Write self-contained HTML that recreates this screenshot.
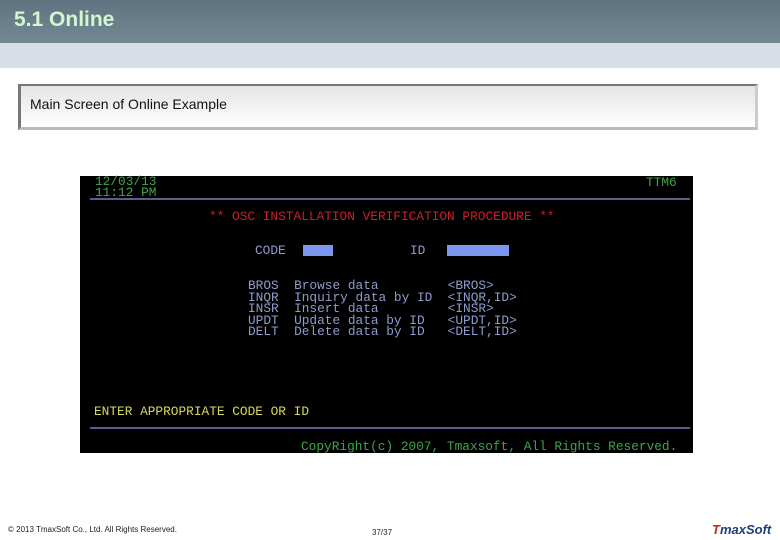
<!DOCTYPE html>
<html><head><meta charset="utf-8"><style>
body{margin:0;width:780px;height:540px;position:relative;background:#fff;overflow:hidden;font-family:"Liberation Sans",sans-serif}
.hdr{position:absolute;left:0;top:0;width:780px;height:43px;background:linear-gradient(#5f7480,#718892)}
.hdr span{position:absolute;left:14px;top:8px;font-size:21px;color:#d4f5d0;font-weight:bold}
.band{position:absolute;left:0;top:43px;width:780px;height:25px;background:#d8dee5}
.box{position:absolute;left:18px;top:84px;width:740px;height:46px;border:1px solid #888;border-left:3px solid #777;border-top:2px solid #777;border-bottom:3px solid #bbb;border-right:3px solid #ccc;background:linear-gradient(#e4e4e4,#fff);box-sizing:border-box}
.box span{position:absolute;left:9px;top:10px;font-size:14px;color:#111}
.term{position:absolute;left:80px;top:176px;width:613px;height:277px;background:#000}
.t{position:absolute;font-family:"Liberation Mono",monospace;font-size:12.8px;white-space:pre;line-height:11.5px}
.g{color:#3ca64a}.r{color:#c8202a}.b{color:#8d9ccc}.y{color:#d8d860}
.line{position:absolute;left:10px;width:600px;height:2px;background:#5a5e8a}
.fld{position:absolute;height:11px;background:#7d96ef}
.foot{position:absolute;font-size:8px;color:#222;top:525px}
</style></head><body>
<div class="hdr"><span>5.1 Online</span></div>
<div class="band"></div>
<div class="box"><span>Main Screen of Online Example</span></div>
<div class="term">
<div class="t g" style="left:15px;top:0px;line-height:11px">12/03/13
11:12 PM</div>
<div class="t g" style="left:566px;top:1px">TTM6</div>
<div class="line" style="top:22px"></div>
<div class="t r" style="left:129px;top:35px">** OSC INSTALLATION VERIFICATION PROCEDURE **</div>
<div class="t b" style="left:175px;top:69px">CODE</div>
<div class="fld" style="left:223px;top:69px;width:30px"></div>
<div class="t b" style="left:330px;top:69px">ID</div>
<div class="fld" style="left:367px;top:69px;width:62px"></div>
<div class="t b" style="left:168px;top:104px">BROS  Browse data         &lt;BROS&gt;
INQR  Inquiry data by ID  &lt;INQR,ID&gt;
INSR  Insert data         &lt;INSR&gt;
UPDT  Update data by ID   &lt;UPDT,ID&gt;
DELT  Delete data by ID   &lt;DELT,ID&gt;</div>
<div class="t y" style="left:14px;top:230px">ENTER APPROPRIATE CODE OR ID</div>
<div class="line" style="top:251px"></div>
<div class="t g" style="left:221px;top:265px">CopyRight(c) 2007, Tmaxsoft, All Rights Reserved.</div>
</div>
<div class="foot" style="left:8px">© 2013 TmaxSoft Co., Ltd. All Rights Reserved.</div>
<div class="foot" style="left:372px;top:528px">37/37</div>
<div style="position:absolute;left:712px;top:522px;font-size:13px;font-weight:bold;font-style:italic;color:#1d3f7a"><span style="color:#c22">T</span>maxSoft</div>
</body></html>
